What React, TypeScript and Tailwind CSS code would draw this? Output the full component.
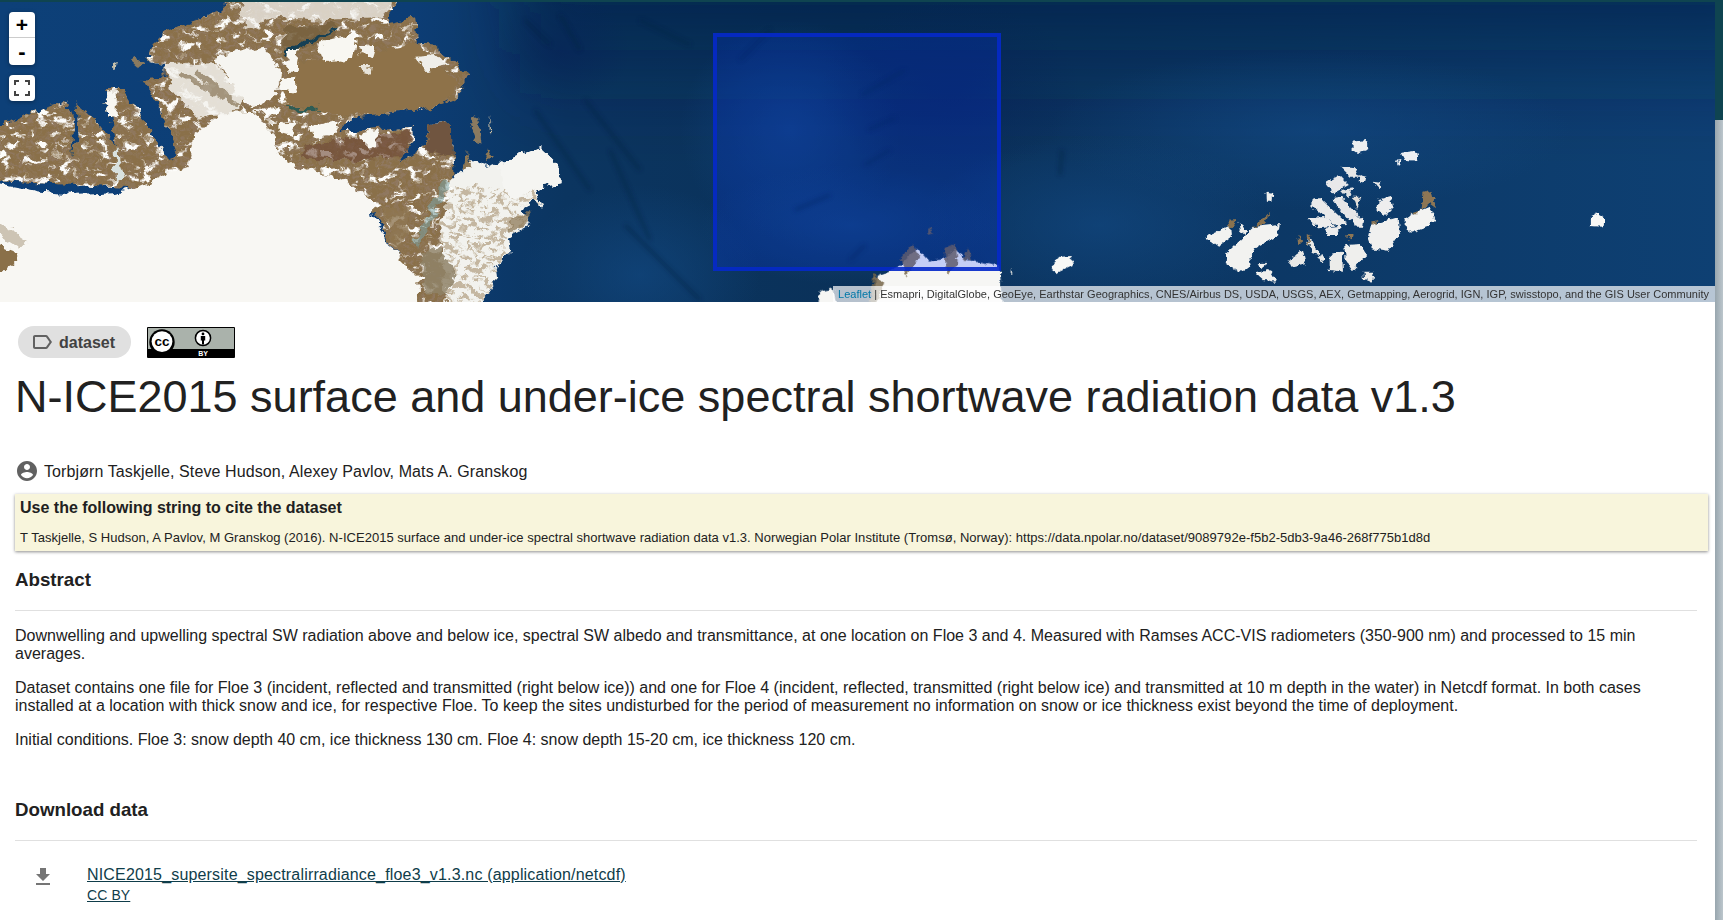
import React from "react";

const Z = ({ x = 0, children }: { x?: number; children: React.ReactNode }) => (
  <g transform={`translate(${x},0) scale(0.3827,0.3333)`}>{children}</g>
);

const LAND =
  "M-60 420 L20 370 L120 320 L170 300 L190 350 L190 470 L205 400 L200 310 L240 350 L300 430 L272 270 L322 270 L352 320 L440 480 L462 470 L420 340 L368 240 L430 232 L430 190 L390 180 L400 125 L440 90 L510 60 L575 30 L640 -40 L1052 -40 L1010 70 L1085 55 L1092 130 L1130 130 L1222 225 L1190 300 L1100 330 L920 350 L885 395 L1080 380 L1075 430 L1040 490 L1112 440 L1120 372 L1180 370 L1185 535 L1200 530 L1240 600 L1225 960 L1095 960 L1040 770 L960 600 L-60 540 Z";

const PENINSULA =
  "M1185 535 L1230 480 L1280 500 L1410 440 L1465 500 L1465 550 L1400 565 L1418 620 L1385 595 L1365 630 L1390 670 L1330 710 L1338 750 L1290 800 L1295 850 L1225 960 L1170 960 L1150 700 Z";

function MapArt() {
  return (
    <svg viewBox="0 2 1715 300" preserveAspectRatio="none" className="block h-full w-full">
      <defs>
        <linearGradient id="sea" x1="0" y1="0" x2="1" y2="0">
          <stop offset="0" stopColor="#0d4078" />
          <stop offset="0.24" stopColor="#0c3d75" />
          <stop offset="0.33" stopColor="#0b3560" />
          <stop offset="0.5" stopColor="#0a3159" />
          <stop offset="0.62" stopColor="#0b345f" />
          <stop offset="1" stopColor="#0e4073" />
        </linearGradient>
        <linearGradient id="topfade" x1="0" y1="0" x2="0" y2="1">
          <stop offset="0" stopColor="#08234a" stopOpacity="0.95" />
          <stop offset="0.42" stopColor="#08234a" stopOpacity="0.2" />
          <stop offset="0.55" stopColor="#08234a" stopOpacity="0" />
        </linearGradient>
        <radialGradient id="lite">
          <stop offset="0" stopColor="#134c88" stopOpacity="0.55" />
          <stop offset="0.5" stopColor="#134c88" stopOpacity="0.28" />
          <stop offset="1" stopColor="#134c88" stopOpacity="0" />
        </radialGradient>
        <radialGradient id="deep">
          <stop offset="0" stopColor="#072357" stopOpacity="0.65" />
          <stop offset="0.5" stopColor="#072357" stopOpacity="0.32" />
          <stop offset="1" stopColor="#072357" stopOpacity="0" />
        </radialGradient>
        <filter id="soft" x="-20%" y="-30%" width="140%" height="160%">
          <feGaussianBlur stdDeviation="32" />
        </filter>
        <filter id="vein" x="-20%" y="-20%" width="140%" height="140%">
          <feGaussianBlur stdDeviation="2.2" />
        </filter>
        <filter id="rough" x="-3%" y="-3%" width="106%" height="106%">
          <feTurbulence type="fractalNoise" baseFrequency="0.035" numOctaves="3" seed="11" result="n" />
          <feDisplacementMap in="SourceGraphic" in2="n" scale="34" xChannelSelector="R" yChannelSelector="G" />
          <feGaussianBlur stdDeviation="1.4" />
        </filter>
        <filter id="roughS" x="-3%" y="-3%" width="106%" height="106%">
          <feTurbulence type="fractalNoise" baseFrequency="0.07" numOctaves="2" seed="5" result="n" />
          <feDisplacementMap in="SourceGraphic" in2="n" scale="18" xChannelSelector="R" yChannelSelector="G" />
          <feGaussianBlur stdDeviation="1" />
        </filter>
        <filter id="mottle" x="0" y="0" width="100%" height="100%">
          <feTurbulence type="fractalNoise" baseFrequency="0.032 0.04" numOctaves="3" seed="7" />
          <feColorMatrix values="0 0 0 0 0.97  0 0 0 0 0.97  0 0 0 0 0.96  7 0 0 0 -3.9" />
        </filter>
        <filter id="dark" x="0" y="0" width="100%" height="100%">
          <feTurbulence type="fractalNoise" baseFrequency="0.09" numOctaves="2" seed="3" />
          <feColorMatrix values="0 0 0 0 0.28  0 0 0 0 0.19  0 0 0 0 0.12  3 0 0 0 -1.25" />
        </filter>
        <filter id="brownspeck" x="0" y="0" width="100%" height="100%">
          <feTurbulence type="fractalNoise" baseFrequency="0.05 0.06" numOctaves="3" seed="21" />
          <feColorMatrix values="0 0 0 0 0.55  0 0 0 0 0.47  0 0 0 0 0.35  8 0 0 0 -3.9" />
        </filter>
        <clipPath id="landclip">
          <path d={LAND} />
        </clipPath>
        <clipPath id="penclip">
          <path d={PENINSULA} />
        </clipPath>
      </defs>

      <rect x="0" y="0" width="1715" height="304" fill="url(#sea)" />
      <g filter="url(#soft)">
        <rect x="520" y="-60" width="1260" height="330" fill="url(#topfade)" />
      </g>
      <ellipse cx="1310" cy="130" rx="260" ry="80" fill="url(#lite)" />
      <ellipse cx="1100" cy="225" rx="180" ry="90" fill="url(#lite)" />
      <ellipse cx="640" cy="275" rx="120" ry="90" fill="url(#lite)" />
      <ellipse cx="790" cy="130" rx="110" ry="110" fill="url(#lite)" />
      <ellipse cx="850" cy="225" rx="150" ry="60" fill="url(#lite)" />
      <ellipse cx="950" cy="90" rx="130" ry="90" fill="url(#deep)" />
      <ellipse cx="560" cy="50" rx="70" ry="60" fill="url(#deep)" />
      <g stroke="#05203f" strokeWidth="3" fill="none" opacity="0.5" filter="url(#vein)">
        <path d="M525 20 L550 45 M560 15 L580 50 M535 110 L590 190 M585 100 L640 170 M625 225 L700 300 M610 150 L650 240 M640 20 L690 45 M740 60 L770 30" />
        <path d="M862 95 L905 70 M868 130 L895 118 M865 165 L890 150 M795 210 L830 195 M850 260 L865 245 M1060 175 L1062 150" />
      </g>

      <Z>
        <g filter="url(#rough)">
          <path d={LAND} fill="#8a7049" />
          <g clipPath="url(#landclip)">
            <rect x="-60" y="-40" width="1360" height="1000" filter="url(#dark)" />
            <rect x="-60" y="-40" width="1360" height="1000" filter="url(#mottle)" />
            <path d="M770 190 L1090 130 L1190 240 L1170 310 L1090 330 L900 345 L740 310 Z" fill="#8e7249" />
            <path d="M1120 372 L1180 370 L1184 470 L1116 450 Z" fill="#6f5540" />
            <path d="M790 440 L1075 390 L1060 470 L950 480 L790 480 Z" fill="#6d4936" opacity="0.62" />
            <path d="M740 85 L870 70 L880 110 L780 150 L740 170 Z" fill="#78623f" opacity="0.9" />
            <path d="M620 -40 L1050 -40 L1000 50 L850 60 L720 50 L640 90 Z" fill="#f3f2ee" opacity="0.75" />
            <path d="M740 150 L880 85 L875 95 L745 165 Z" fill="#123f55" />
            <path d="M745 322 L830 320 L830 330 L745 332 Z" fill="#2f5b54" />
            <path d="M1085 170 L1140 165 L1170 195 L1110 210 Z" fill="#efeee9" />
            <path d="M945 400 L990 392 L985 440 L950 435 Z" fill="#f8f7f2" />
            <path d="M810 380 L890 360 L870 405 L820 410 Z" fill="#f8f7f2" />
            <path d="M730 370 L775 368 L760 405 L730 395 Z" fill="#f8f7f2" />
            <path d="M730 235 L775 230 L778 275 L735 270 Z" fill="#f8f7f2" />
            <path d="M752 150 L780 150 L775 215 L750 215 Z" fill="#f8f7f2" />
            <path d="M830 130 L930 100 L920 175 L850 190 Z" fill="#f8f7f2" />
            <path d="M940 135 L985 135 L975 175 L945 165 Z" fill="#f4f3ee" />
            <path d="M272 280 L305 280 L305 350 L280 345 Z" fill="#f8f7f2" />
            <path d="M940 195 L970 195 L965 225 L945 220 Z" fill="#e8e4da" />
          </g>
          <path d="M-60 540 L110 575 L190 585 L300 580 L350 565 L440 520 L490 500 L510 400 L580 340 L660 335 L700 375 L735 470 L780 500 L900 540 L970 600 L980 660 L1040 770 L1090 830 L1095 960 L-60 960 Z" fill="#f8f7f3" />
          <path d="M430 195 L560 190 L640 300 L600 345 L510 350 L450 270 Z" fill="#f3f2ed" opacity="0.85" />
          <path d="M480 215 L600 290 L590 300 L470 230 Z M520 210 L630 310 L615 318 L510 225 Z" fill="#7f6c4c" opacity="0.65" />
          <path d="M560 170 L690 140 L730 220 L720 285 L660 325 L620 280 Z" fill="#f6f5f1" />
          <path d="M-60 610 L50 710 L70 725 L50 740 L-60 660 Z" fill="#a99a80" opacity="0.55" />
          <path d="M-60 720 L28 745 L45 785 L-60 850 Z" fill="#8a7049" />
          <path d="M300 430 L330 540 L300 540 Z" fill="#d9e2df" />
          <path d={PENINSULA} fill="#f2f2ee" />
          <g clipPath="url(#penclip)">
            <rect x="1140" y="560" width="270" height="400" filter="url(#brownspeck)" />
            <path d="M1300 480 L1410 440 L1465 500 L1465 550 L1330 600 Z" fill="#f5f5f2" />
          </g>
          <path d="M1160 540 L1180 550 L1150 610 L1095 740 L1085 720 Z" fill="#7ba3a2" opacity="0.55" />
          <path d="M1100 760 L1135 740 L1170 780 L1195 810 L1170 880 L1105 880 Z" fill="#8f8367" opacity="0.85" />
          <path d="M1340 640 L1380 640 L1385 670 L1330 700 Z" fill="#8e7a58" opacity="0.75" />
          <path d="M1000 620 L1080 630 L1050 740 L1030 740 Z" fill="#8f7752" opacity="0.8" />
        </g>
        <g filter="url(#roughS)">
          <path d="M1235 345 L1250 355 L1258 430 L1245 428 L1228 375 Z" fill="#8a7a60" />
          <path d="M1278 345 L1284 400 L1280 398 Z" fill="#d8c8a8" />
          <path d="M295 185 L305 190 L302 210 L296 208 Z" fill="#c9c3ad" />
          <path d="M350 170 L375 190 L360 205 L346 190 Z" fill="#8a7a5e" />
          <path d="M1275 445 L1290 470 L1270 480 Z" fill="#8e7855" />
          <path d="M1220 455 L1232 500 L1210 510 Z" fill="#8e7855" />
        </g>
      </Z>

      <Z x={600}>
        <g filter="url(#roughS)">
          <path d="M565 960 L575 875 L610 865 L625 960 Z" fill="#f6f6f4" />
          <path d="M720 960 L720 830 L780 800 L830 745 L860 785 L905 775 L925 745 L960 780 L1045 800 L1052 960 Z" fill="#f6f6f4" />
          <path d="M715 820 L740 850 L725 905 L705 905 Z M785 775 L815 735 L835 770 L800 830 Z M900 745 L930 730 L935 795 L905 825 Z M960 745 L970 780 L950 780 Z M860 680 L870 700 L855 705 Z" fill="#77664a" opacity="0.85" />
          <path d="M1178 800 L1200 770 L1232 768 L1235 795 L1190 820 Z" fill="#f8f8f6" />
          <path d="M1074 802 L1078 820 L1073 822 Z" fill="#e8e8e4" />
        </g>
      </Z>

      <Z x={1123}>
        <g filter="url(#roughS)">
          <path d="M600 425 L638 420 L638 448 L612 460 L600 450 Z" fill="#eceef0" />
          <path d="M728 458 L765 452 L770 482 L738 480 Z M713 482 L725 480 L720 498 Z" fill="#eef0f3" />
          <path d="M375 575 L390 578 L388 605 L376 605 Z" fill="#f0f0ee" />
          <path d="M215 710 L280 678 L282 710 L248 740 Z" fill="#f2f2f0" />
          <path d="M302 668 L322 690 L318 705 L305 690 Z" fill="#eeeeec" />
          <path d="M345 680 L410 672 L405 705 L345 745 L330 775 L335 800 L300 815 L268 790 L270 760 L305 722 Z" fill="#f2f2f0" />
          <path d="M275 662 L300 660 L280 690 Z M340 680 L385 635 L370 672 Z" fill="#8a7250" />
          <path d="M352 790 L372 788 L360 812 Z M345 820 L385 810 L402 845 L365 840 Z" fill="#f0f0ee" />
          <path d="M568 500 L605 505 L615 530 L595 530 Z" fill="#e6e7e8" />
          <path d="M618 525 L636 530 L632 548 L616 542 Z M655 545 L675 548 L668 565 Z" fill="#e8e8e8" />
          <path d="M530 550 L565 525 L590 555 L550 580 Z" fill="#e8e8ea" />
          <path d="M570 570 L600 565 L590 595 Z" fill="#dfe0e2" />
          <path d="M495 595 L515 595 L585 670 L560 680 L495 620 Z" fill="#eaeaea" />
          <path d="M545 595 L570 590 L620 650 L590 660 Z" fill="#e6e6e8" />
          <path d="M600 590 L620 590 L612 630 Z" fill="#e4e0da" />
          <path d="M482 655 L530 650 L555 680 L510 685 Z M530 685 L570 680 L560 705 L535 705 Z M600 655 L628 650 L625 680 L605 680 Z" fill="#ececec" />
          <path d="M668 600 L700 590 L706 620 L685 645 L665 630 Z" fill="#eeeeee" />
          <path d="M648 675 L720 650 L724 700 L695 752 L650 745 L640 710 Z" fill="#f0f0ef" />
          <path d="M736 660 L760 640 L800 620 L818 650 L800 680 L755 698 L736 680 Z" fill="#f3f3f2" />
          <path d="M780 630 L785 578 L805 572 L818 625 L800 610 Z" fill="#8d7655" />
          <path d="M650 665 L665 660 L655 678 Z M750 640 L780 628 L770 640 Z M580 705 L600 705 L595 722 Z" fill="#8d7655" />
          <path d="M432 780 L470 750 L478 790 L440 800 Z M478 715 L495 722 L515 765 L495 760 Z M510 770 L525 762 L520 790 Z" fill="#e9e9e7" />
          <path d="M458 700 L468 730 L460 735 Z M480 705 L490 710 L484 735 Z" fill="#8d7655" />
          <path d="M540 765 L572 755 L575 815 L540 810 Z" fill="#ececea" />
          <path d="M578 735 L620 732 L638 765 L600 810 L582 780 Z" fill="#efefed" />
          <path d="M628 815 L655 815 L652 845 L630 840 Z" fill="#ebebea" />
          <path d="M1220 652 L1240 640 L1260 652 L1255 680 L1220 678 Z" fill="#f8f8f6" />
        </g>
      </Z>
    </svg>
  );
}

function CcBadge() {
  return (
    <svg width="88" height="31" viewBox="0 0 88 31" className="block">
      <rect x="0" y="0" width="88" height="31" rx="1" fill="#000" />
      <rect x="1" y="1" width="86" height="21" fill="#aab2ab" />
      <circle cx="15" cy="15" r="12.7" fill="#000" />
      <circle cx="15" cy="14.6" r="10.4" fill="#fff" />
      <text x="15" y="19" textAnchor="middle" fontSize="13.5" fontWeight="700" fill="#000" fontFamily="'Liberation Sans', sans-serif">cc</text>
      <circle cx="56" cy="11" r="7.6" fill="#fff" stroke="#000" strokeWidth="1.5" />
      <circle cx="56" cy="6.9" r="1.4" fill="#000" />
      <path d="M53.8 9 h4.4 v4.4 h-1.2 v4.2 h-2 v-4.2 h-1.2 Z" fill="#000" />
      <text x="56" y="29" textAnchor="middle" fontSize="7" fontWeight="700" fill="#fff" fontFamily="'Liberation Sans', sans-serif">BY</text>
    </svg>
  );
}

export default function App() {
  return (
    <div className="flex h-[920px] overflow-hidden bg-white text-[16px] leading-[19px] text-[#212121] font-['Liberation_Sans',Arial,sans-serif]">
      <main className="min-w-0 flex-1 overflow-hidden">
        <div className="h-[2px] bg-[#0f4450]" />
        <div className="relative h-[300px] overflow-hidden">
          <MapArt />
          <div className="absolute left-[9px] top-[10px] w-[26px] rounded-[4px] bg-white shadow-[0_1px_4px_rgba(0,0,0,0.35)]">
            <div className="flex h-[26px] items-center justify-center border-b border-[#cccccc] text-[21px] font-bold text-black">+</div>
            <div className="flex h-[27px] items-center justify-center text-[22px] font-bold text-black">-</div>
          </div>
          <div className="absolute left-[9px] top-[73px] flex h-[26px] w-[26px] items-center justify-center rounded-[4px] bg-white shadow-[0_1px_4px_rgba(0,0,0,0.35)]">
            <svg width="16" height="16" viewBox="0 0 16 16" fill="none" stroke="#444" strokeWidth="2">
              <path d="M1 5V1h4M11 1h4v4M15 11v4h-4M5 15H1v-4" />
            </svg>
          </div>
          <div className="pointer-events-none absolute left-[713px] top-[31px] h-[238px] w-[288px] border-[4px] border-[#0529c8]/90 bg-[#0433ff]/20" />
          <div className="absolute bottom-0 right-0 h-[16px] w-[882px] whitespace-nowrap bg-[rgba(255,255,255,0.7)] pl-[5px] text-[11px] leading-[16px] tracking-[0.02px] text-[#333333]">
            <span className="text-[#0078a8]">Leaflet</span> | Esmapri, DigitalGlobe, GeoEye, Earthstar Geographics, CNES/Airbus DS, USDA, USGS, AEX, Getmapping, Aerogrid, IGN, IGP, swisstopo, and the GIS User Community
          </div>
        </div>

        <div className="pl-[15px] pr-[7px]">
          <div className="flex items-center gap-[16px] pl-[3px] pt-[24px]">
            <div className="flex h-[32px] w-[113px] items-center rounded-full bg-[#e0e0e0] pl-[12px] text-[16px] font-bold text-[#424242]">
              <svg width="24" height="24" viewBox="0 0 24 24" className="mr-[5px] shrink-0" fill="#616161">
                <path d="M17.63 5.84C17.27 5.33 16.67 5 16 5L5 5.01C3.9 5.01 3 5.9 3 7v10c0 1.1.9 1.99 2 1.99L16 19c.67 0 1.27-.33 1.63-.84L22 12l-4.37-6.16zM16 17H5V7h11l3.55 5L16 17z" />
              </svg>
              dataset
            </div>
            <CcBadge />
          </div>

          <h1 className="mt-[11px] text-[45px] font-normal leading-[56px] text-[#212121]">
            N-ICE2015 surface and under-ice spectral shortwave radiation data v1.3
          </h1>

          <div className="mt-[34px] flex items-center tracking-[0.1px]">
            <svg width="24" height="24" viewBox="0 0 24 24" fill="#616161" className="mr-[5px] shrink-0">
              <path d="M12 2C6.48 2 2 6.48 2 12s4.48 10 10 10 10-4.48 10-10S17.52 2 12 2zm0 3c1.66 0 3 1.34 3 3s-1.34 3-3 3-3-1.34-3-3 1.34-3 3-3zm0 14.2c-2.5 0-4.71-1.28-6-3.22.03-1.99 4-3.08 6-3.08 1.99 0 5.97 1.09 6 3.08-1.29 1.94-3.5 3.22-6 3.22z" />
            </svg>
            Torbjørn Taskjelle, Steve Hudson, Alexey Pavlov, Mats A. Granskog
          </div>

          <div className="mt-[11px] h-[57px] bg-[#f8f5dc] pl-[5px] pt-[4px] shadow-[0_1px_3px_rgba(0,0,0,0.45)]">
            <div className="text-[16px] font-bold leading-[20px]">Use the following string to cite the dataset</div>
            <div className="mt-[12px] text-[13px] leading-[16px] tracking-[0.025px]">
              T Taskjelle, S Hudson, A Pavlov, M Granskog (2016). N-ICE2015 surface and under-ice spectral shortwave radiation data v1.3. Norwegian Polar Institute (Tromsø, Norway): https://data.npolar.no/dataset/9089792e-f5b2-5db3-9a46-268f775b1d8d
            </div>
          </div>

          <h2 className="mt-[18px] text-[18.72px] font-bold leading-[22px]">Abstract</h2>
          <div className="mr-[11px] mt-[19px] h-px bg-[#e0e0e0]" />
          <div className="mr-[11px] mt-[16px] leading-[18px]">
            <p className="mb-[16px]">
              Downwelling and upwelling spectral SW radiation above and below ice, spectral SW albedo and transmittance, at one location on Floe 3 and 4. Measured with Ramses ACC-VIS radiometers (350-900 nm) and processed to 15 min averages.
            </p>
            <p className="mb-[16px]">
              Dataset contains one file for Floe 3 (incident, reflected and transmitted (right below ice)) and one for Floe 4 (incident, reflected, transmitted (right below ice) and transmitted at 10 m depth in the water) in Netcdf format. In both cases installed at a location with thick snow and ice, for respective Floe. To keep the sites undisturbed for the period of measurement no information on snow or ice thickness exist beyond the time of deployment.
            </p>
            <p>Initial conditions. Floe 3: snow depth 40 cm, ice thickness 130 cm. Floe 4: snow depth 15-20 cm, ice thickness 120 cm.</p>
          </div>

          <h2 className="mt-[50px] text-[18.72px] font-bold leading-[22px]">Download data</h2>
          <div className="mr-[11px] mt-[19px] h-px bg-[#e0e0e0]" />

          <div className="mt-[24px] flex">
            <svg width="24" height="24" viewBox="0 0 24 24" fill="#757575" className="ml-[16px] mr-[32px] shrink-0">
              <path d="M19 9h-4V3H9v6H5l7 7 7-7zM5 18v2h14v-2H5z" />
            </svg>
            <div className="leading-[20px] text-[#0f3d4a]">
              <div className="tracking-[0.17px] underline">NICE2015_supersite_spectralirradiance_floe3_v1.3.nc (application/netcdf)</div>
              <div className="text-[14px] leading-[20px] tracking-[0.1px] underline">CC BY</div>
            </div>
          </div>
        </div>
      </main>
      <aside className="flex w-[8px] shrink-0 flex-col bg-linear-to-r from-[#98a6ae] to-[#bcc6cc]">
        <div className="h-[120px] bg-[#0f4450]" />
      </aside>
    </div>
  );
}
